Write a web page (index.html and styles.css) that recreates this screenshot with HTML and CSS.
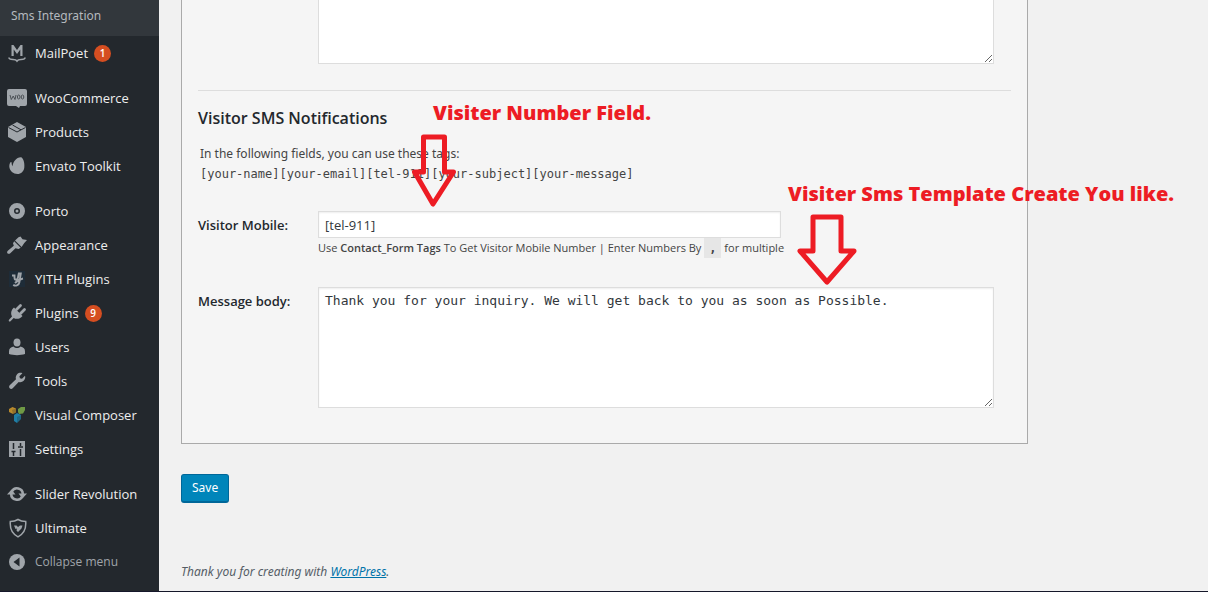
FILE: index.html
```html
<!DOCTYPE html>
<html lang="en">
<head>
<meta charset="utf-8">
<title>Sms Integration</title>
<link rel="stylesheet" href="styles.css">
</head>
<body>
<div class="page">
  <nav class="sidebar" aria-label="Admin menu">
    <a class="submenu" href="#">Sms Integration</a>
    <ul class="menu">
      <li><a href="#"><svg class="icon" viewBox="0 0 20 20"><path d="M4.500 13V2h2L10 7l3.500-5h2v11h-2.200V6.500L10 11 6.700 6.500V13z"/><path d="M2 14.500c0 2 1.500 2 4 2 2 0 3.200.2 4 1.500.8-1.300 2-1.500 4-1.500 2.500 0 4 0 4-2" fill="none" stroke="currentColor" stroke-width="1.600"/></svg>MailPoet<span class="badge">1</span></a></li>
    </ul>
    <ul class="menu">
      <li><a href="#"><svg class="icon" viewBox="0 0 20 20"><path d="M2 1h16a2 2 0 0 1 2 2v13a2 2 0 0 1-2 2h-5l-1 2-3-2H2a2 2 0 0 1-2-2V3a2 2 0 0 1 2-2z"/><path d="M3 7l1.300 4.500L6.200 8 8 11.500 9 7" fill="none" stroke="#4b5055" stroke-width="1"/><ellipse cx="11.700" cy="9" rx="1.300" ry="2" fill="none" stroke="#4b5055"/><ellipse cx="15.500" cy="9" rx="1.300" ry="2" fill="none" stroke="#4b5055"/></svg>WooCommerce</a></li>
      <li><a href="#"><svg class="icon" viewBox="0 0 20 20"><path d="M10 0l9 5v10l-9 5-9-5V5z"/><path d="M1.500 5.500L10 10l8.500-4.500M5.500 3l8.500 4.800" fill="none" stroke="#23282d"/></svg>Products</a></li>
      <li><a href="#"><svg class="icon" viewBox="0 0 20 20"><path d="M14 1.200c1.800.4 4 5 3.300 10.300C16.800 15.500 14 18 10.500 18 6.500 18 2.500 15 2.300 10.500c0-2 .6-3.700 1.500-4.500.5-.3.800 0 .8.700 0 1.500.3 2.700 1 3.600.2-4.500 4-9.300 8.400-9.100z"/></svg>Envato Toolkit</a></li>
    </ul>
    <ul class="menu">
      <li><a href="#"><svg class="icon" viewBox="0 0 20 20"><circle cx="10" cy="10" r="5.500" fill="none" stroke="currentColor" stroke-width="5"/><circle cx="10" cy="10" r="1.500"/></svg>Porto</a></li>
      <li><a href="#"><svg class="icon" viewBox="0 0 20 20"><path d="M11.500 2.200L8 5.600l6.600 6.500 2.700-4.200L20 5l-4.500-.8-2-2.700z"/><path d="M7.200 6.300l6.500 6.500-2.200 1.200-3-.8-5.200 5c-1 1-2.500.8-3-.2-.5-.9 0-1.900.8-2.500l5.700-4.700-.8-2.600z"/></svg>Appearance</a></li>
      <li><a href="#"><svg class="icon" viewBox="0 0 20 20"><path d="M2 2h16v16H2z" fill="#1e2c38"/><path d="M5 6.500h2.500v2c0 3 3 3 3.500 0l.8-4h2l-1.500 9c-.5 3-4 4-6 2.200M8 14c2-2 5-4 8-4.500" fill="none" stroke="currentColor" stroke-width="1.900"/></svg>YITH Plugins</a></li>
      <li><a href="#"><svg class="icon" viewBox="0 0 20 20"><path d="M7 4.500l8.500 8.500c-2.500 3-6 3.600-8.800 2L3.500 18.200c-1.200.9-2.300-.3-1.500-1.500L5 13.500C3.500 10.500 4 7 7 4.500z"/><path d="M9.500 6.500l4-4M13.500 10.500l4-4" stroke="currentColor" stroke-width="2.800" stroke-linecap="round"/></svg>Plugins<span class="badge">9</span></a></li>
      <li><a href="#"><svg class="icon" viewBox="0 0 20 20"><ellipse cx="10" cy="5.500" rx="3.500" ry="4"/><path d="M6.500 9.500c2 2 5 2 7 0 3 .7 4.500 2 4.500 5V17c-4.500 1.500-11.500 1.500-16 0v-2.500c0-3 1.500-4.300 4.500-5z"/></svg>Users</a></li>
      <li><a href="#"><svg class="icon" viewBox="0 0 20 20"><path d="M16.700 9.800c-1.400 1.300-3.300 1.700-5 1.100l-6 6.300c-.8.900-2.200.9-3 0s-.8-2.200 0-3l6.300-6c-.6-1.700-.2-3.600 1.100-5C11.500 1.900 13.600 1.500 15.400 2.200l-3 3 .5 2.100 2.100.5 3-3c.6 1.700.2 3.600-1.300 5z"/></svg>Tools</a></li>
      <li><a href="#"><svg class="icon" viewBox="0 0 20 20"><path d="M2 4l3.500-2L9 3.500v4L6 9 2 7z" fill="#b98a2c"/><path d="M11 4l3-2h4v3l-2 3.500-4 .5-1-2z" fill="#6f9a45"/><path d="M7 10l3-2 4 2v4l-4 4-3-2z" fill="#1f7ea6"/><path d="M5 5l4-1.500v4L6 9zM10 12l4-2v4l-4 4z" fill="#23282d" opacity=".25"/></svg>Visual Composer</a></li>
      <li><a href="#"><svg class="icon" viewBox="0 0 20 20"><path d="M2 2h16v16H2z"/><path d="M6.500 4v6M6.500 13v4M4.500 12.500h4M13.500 4v3M13.500 10v7M11 8h5" stroke="#23282d" stroke-width="1.500"/></svg>Settings</a></li>
    </ul>
    <ul class="menu">
      <li><a href="#"><svg class="icon" viewBox="0 0 20 20"><path d="M4.800 7.500A5.800 5.800 0 0 1 15.800 10M15.200 12.500A5.800 5.800 0 0 1 4.200 10" fill="none" stroke="currentColor" stroke-width="2.600"/><path d="M0 10.500L4.500 5.500 8.500 10.500zM20 9.500l-4.500 5-4-5z"/></svg>Slider Revolution</a></li>
      <li><a href="#"><svg class="icon" viewBox="0 0 20 20"><path d="M11 1.500c2.500 1.600 5 2 7.700 2 .6 7.500-2 12.500-7.700 15.300C5.300 16 2.700 11 3.300 3.500c2.700 0 5.200-.4 7.700-2z" fill="none" stroke="currentColor" stroke-width="1.500"/><path d="M7 7.500h2.500l1.500 1.500 2-1.500h2.500l-1 3-3.500 3.500-1.500-1.500.5-2-1.500.5z"/></svg>Ultimate</a></li>
      <li><button class="collapse" type="button"><svg class="icon" viewBox="0 0 20 20"><circle cx="10" cy="10" r="8"/><path d="M12.500 5.500v9L6.500 10z" fill="#23282d"/></svg>Collapse menu</button></li>
    </ul>
  </nav>
  <main class="content">
    <form class="form">
      <section class="panel">
        <div class="row">
          <span></span>
          <textarea class="area upper" aria-label="Admin message body"></textarea>
        </div>
        <hr class="rule">
        <h2 class="title">Visitor SMS Notifications</h2>
        <p class="intro">In the following fields, you can use these tags:<br><code>[your-name][your-email][tel-911][your-subject][your-message]</code></p>
        <div class="row">
          <label class="label" for="mobile">Visitor Mobile:</label>
          <div>
            <input class="mobile" id="mobile" type="text" value="[tel-911]">
            <p class="help">Use <b>Contact_Form Tags</b> To Get Visitor Mobile Number | Enter Numbers By <code class="key">,</code> for multiple</p>
          </div>
        </div>
        <div class="row message">
          <label class="label" for="body">Message body:</label>
          <textarea class="area" id="body">Thank you for your inquiry. We will get back to you as soon as Possible.</textarea>
        </div>
        <div class="note note-number">Visiter Number Field.</div>
        <svg class="arrow arrow-number" viewBox="0 0 46 74"><path d="M12.500 3h21v35h9L22 70 3.500 38h9z"/></svg>
        <div class="note note-template">Visiter Sms Template Create You like.</div>
        <svg class="arrow arrow-template" viewBox="0 0 60 72"><path d="M16 3h28v34h13L30 68 3 37h13z"/></svg>
      </section>
      <button class="save" type="button">Save</button>
    </form>
    <footer class="footer">Thank you for creating with <a href="#">WordPress</a>.</footer>
  </main>
</div>
</body>
</html>
```
FILE: styles.css
```css
* { box-sizing: border-box; }
body {
  margin: 0;
  background: #f1f1f1;
  color: #444;
  font: 13px/20px "Open Sans", "Noto Sans", sans-serif;
}
.page {
  display: grid;
  grid-template-columns: 159px 1fr;
  min-height: 100vh;
  border-bottom: 1px solid #15172a;
}
.sidebar { background: #23282d; }
.submenu {
  display: block;
  height: 36px;
  padding: 6px 11px;
  background: #32373c;
  color: #b4b9be;
  font-family: "Noto Sans", "Open Sans", sans-serif;
  font-size: 12px;
  text-decoration: none;
}
.menu { margin: 0 0 11px; padding: 0; list-style: none; }
.menu:last-child { margin: 0; }
.menu a, .collapse {
  display: flex;
  align-items: center;
  width: 100%;
  height: 34px;
  padding: 0 0 0 7px;
  border: 0;
  background: none;
  color: #eee;
  font: inherit;
  text-decoration: none;
  white-space: nowrap;
}
.menu a { font-weight: 500; }
.menu .collapse { color: #a0a5aa; font-size: 12px; }
.icon {
  width: 20px;
  height: 20px;
  margin-right: 8px;
  color: #a0a5aa;
  fill: currentColor;
}
.badge {
  min-width: 17px;
  height: 17px;
  margin-left: 6px;
  border-radius: 9px;
  background: #d54e21;
  color: #fff;
  font-size: 10px;
  font-weight: 600;
  line-height: 17px;
  text-align: center;
}
.content {
  display: flex;
  flex-direction: column;
  justify-content: space-between;
  padding: 0 180px 9px 22px;
}
.panel {
  position: relative;
  padding: 0 16px 35px;
  border: 1px solid #aaa;
  border-top: 0;
  background: #f5f5f5;
}
.row { display: grid; grid-template-columns: 120px 1fr; padding-right: 17px; }
.label { padding-top: 4px; color: #23282d; font-weight: 600; }
.area, .mobile {
  display: block;
  border: 1px solid #ddd;
  background: #fff;
  box-shadow: inset 0 1px 2px rgba(0, 0, 0, .07);
  color: #32373c;
}
.area {
  width: 100%;
  height: 121px;
  margin: 0;
  padding: 4px 6px;
  font: 13px/18px "DejaVu Sans Mono", monospace;
  resize: vertical;
}
.upper { height: 64px; border-top: 0; box-shadow: none; }
.mobile {
  width: 463px;
  height: 27px;
  padding: 0 6px;
  font: 13px/20px "Open Sans", "Noto Sans", sans-serif;
}
.rule { margin: 26px 0 16px; border: 0; border-top: 1px solid #ddd; }
.title { margin: 0 0 15px; color: #23282d; font-size: 16px; font-weight: 600; line-height: 22px; }
.intro { margin: 0 0 27px 2px; font: 12px/20px "Noto Sans", "Open Sans", sans-serif; }
.intro code, .key { font: 12px/20px "DejaVu Sans Mono", monospace; }
.help { margin: 0; font-size: 11px; line-height: 20px; white-space: nowrap; }
.help b { font-weight: 600; }
.key { display: inline-block; padding: 0 5px; background: #e6e6e6; font-weight: 700; }
.message { margin-top: 29px; }
.save {
  display: block;
  height: 29px;
  margin-top: 30px;
  padding: 0 10px;
  border: 1px solid #006799;
  border-bottom-width: 2px;
  border-radius: 3px;
  background: #0085ba;
  color: #fff;
  font: 12px/24px "Noto Sans", "Open Sans", sans-serif;
}
.footer {
  color: #555d66;
  font: italic 12px/20px "Noto Sans", "Open Sans", sans-serif;
}
.footer a { color: #0073aa; }
.note {
  position: absolute;
  color: #ed1c24;
  font: 800 20px/24px "Open Sans", Inter, sans-serif;
  white-space: nowrap;
}
.note-number { left: 251px; top: 101px; }
.note-template { left: 606px; top: 182px; }
.arrow { position: absolute; fill: none; stroke: #ed1c24; stroke-width: 5; stroke-linejoin: round; }
.arrow-number { left: 229px; top: 134px; width: 46px; height: 74px; }
.arrow-template { left: 615px; top: 214px; width: 60px; height: 72px; }
```
